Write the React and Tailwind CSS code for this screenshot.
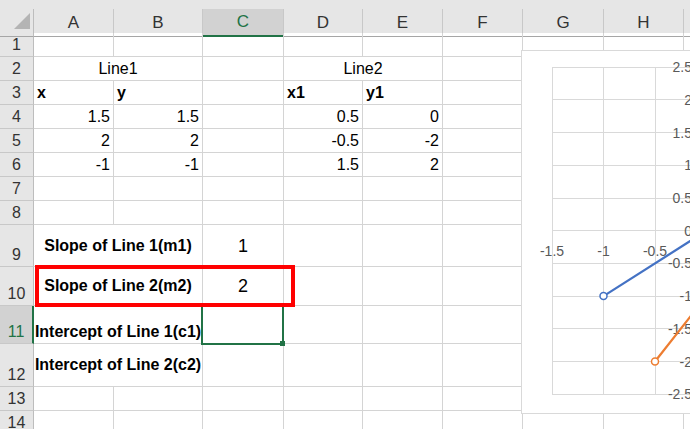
import React from "react";

const cols =
  "grid grid-cols-[34px_80px_89px_81px_79px_80px_80px_81px_80px_80px]";

const letters = ["A", "B", "C", "D", "E", "F", "G", "H", "I"];

// each row: height class, cells for A.. (rest filled empty)
const rows = [
  { n: 1, h: "h-[24px]", cells: [] },
  {
    n: 2,
    h: "h-[24px]",
    cells: [
      { span: 2, text: "Line1", align: "center" },
      {},
      { span: 2, text: "Line2", align: "center" },
    ],
  },
  {
    n: 3,
    h: "h-[24px]",
    cells: [
      { text: "x", bold: true },
      { text: "y", bold: true },
      {},
      { text: "x1", bold: true },
      { text: "y1", bold: true },
    ],
  },
  {
    n: 4,
    h: "h-[24px]",
    cells: [
      { text: "1.5", align: "right" },
      { text: "1.5", align: "right" },
      {},
      { text: "0.5", align: "right" },
      { text: "0", align: "right" },
    ],
  },
  {
    n: 5,
    h: "h-[24px]",
    cells: [
      { text: "2", align: "right" },
      { text: "2", align: "right" },
      {},
      { text: "-0.5", align: "right" },
      { text: "-2", align: "right" },
    ],
  },
  {
    n: 6,
    h: "h-[24px]",
    cells: [
      { text: "-1", align: "right" },
      { text: "-1", align: "right" },
      {},
      { text: "1.5", align: "right" },
      { text: "2", align: "right" },
    ],
  },
  { n: 7, h: "h-[24px]", cells: [] },
  { n: 8, h: "h-[24px]", cells: [] },
  {
    n: 9,
    h: "h-[42px]",
    cells: [
      { span: 2, text: "Slope of Line 1(m1)", bold: true, align: "center", mid: true },
      { text: "1", align: "center", mid: true, size: "text-[18px]" },
    ],
  },
  {
    n: 10,
    h: "h-[39px]",
    cells: [
      { span: 2, text: "Slope of Line 2(m2)", bold: true, align: "center", mid: true },
      { text: "2", align: "center", mid: true, size: "text-[18px]" },
    ],
  },
  {
    n: 11,
    h: "h-[38px]",
    active: true,
    cells: [
      { span: 2, text: "Intercept of Line 1(c1)", bold: true, align: "center" },
      {},
    ],
  },
  {
    n: 12,
    h: "h-[43px]",
    cells: [
      { span: 2, text: "Intercept of Line 2(c2)", bold: true, align: "center", mid: true },
      {},
    ],
  },
  { n: 13, h: "h-[24px]", cells: [] },
  { n: 14, h: "h-[24px]", cells: [] },
];

function Cell({ c }) {
  const span = c.span === 2 ? "col-span-2" : "";
  const justify =
    c.align === "right"
      ? "justify-end"
      : c.align === "center"
      ? "justify-center"
      : "justify-start";
  const items = c.mid ? "items-center" : "items-end pb-[2px]";
  const weight = c.bold ? "font-bold" : "font-normal";
  const size = c.size || "text-[16px]";
  return (
    <div
      className={`${span} flex ${justify} ${items} px-[3px] border-r border-b border-[#d4d4d4] overflow-visible whitespace-nowrap`}
    >
      {c.text && (
        <span className={`${weight} ${size} leading-[18px] text-black`}>
          {c.text}
        </span>
      )}
    </div>
  );
}

function Row({ row }) {
  const used = row.cells.reduce((s, c) => s + (c.span || 1), 0);
  const filler = Array.from({ length: Math.max(0, 9 - used) }, () => ({}));
  const all = [...row.cells, ...filler];
  return (
    <div className={`${cols} ${row.h}`}>
      <div
        className={
          row.active
            ? "flex items-end justify-center pb-[2px] bg-[#d2d2d2] border-b border-[#c8c8c8] border-r-2 border-r-[#217346] text-[16px] leading-[18px] text-[#217346]"
            : "flex items-end justify-center pb-[2px] bg-[#e6e6e6] border-b border-[#c8c8c8] border-r border-r-[#bdbdbd] text-[16px] leading-[18px] text-[#333333]"
        }
      >
        {row.n}
      </div>
      {all.map((c, i) => (
        <Cell key={i} c={c} />
      ))}
    </div>
  );
}

function Chart() {
  const X = (u) => 184.5 + 103 * u;
  const Y = (v) => 179.7 - 65.4 * v;
  const us = [-1.5, -1, -0.5, 0, 0.5, 1, 1.5, 2];
  const vs = [2.5, 2, 1.5, 1, 0.5, 0, -0.5, -1, -1.5, -2, -2.5];
  const blue = [
    [1.5, 1.5],
    [2, 2],
    [-1, -1],
  ];
  const orange = [
    [0.5, 0],
    [-0.5, -2],
    [1.5, 2],
  ];
  const pts = (arr) => arr.map(([u, v]) => `${X(u)},${Y(v)}`).join(" ");
  return (
    <div className="absolute left-[521px] top-[50px] w-[420px] h-[364px] bg-white border border-[#d9d9d9]">
      <svg width="420" height="362" className="block">
        {us.map((u) => (
          <line
            key={"v" + u}
            x1={X(u)}
            x2={X(u)}
            y1={Y(2.5)}
            y2={Y(-2.5)}
            stroke="#d9d9d9"
            strokeWidth="1"
            shapeRendering="crispEdges"
          />
        ))}
        {vs.map((v) => (
          <line
            key={"h" + v}
            x1={X(-1.5)}
            x2={X(2)}
            y1={Y(v)}
            y2={Y(v)}
            stroke="#d9d9d9"
            strokeWidth="1"
            shapeRendering="crispEdges"
          />
        ))}
        {[-1.5, -1, -0.5].map((u) => (
          <text
            key={"xl" + u}
            x={X(u)}
            y={Y(0) + 25}
            textAnchor="middle"
            fontSize="14"
            fill="#595959"
            fontFamily="Liberation Sans, Arial, sans-serif"
          >
            {u}
          </text>
        ))}
        {vs.map((v) => (
          <text
            key={"yl" + v}
            x={170}
            y={Y(v) + 5}
            textAnchor="end"
            fontSize="14"
            fill="#595959"
            fontFamily="Liberation Sans, Arial, sans-serif"
          >
            {v}
          </text>
        ))}
        <polyline
          points={pts(blue)}
          fill="none"
          stroke="#4472c4"
          strokeWidth="2.25"
          strokeLinejoin="round"
        />
        <polyline
          points={pts(orange)}
          fill="none"
          stroke="#ed7d31"
          strokeWidth="2.25"
          strokeLinejoin="round"
        />
        {blue.map(([u, v], i) => (
          <circle
            key={"bm" + i}
            cx={X(u)}
            cy={Y(v)}
            r="3.5"
            fill="white"
            stroke="#4472c4"
            strokeWidth="1.5"
          />
        ))}
        {orange.map(([u, v], i) => (
          <circle
            key={"om" + i}
            cx={X(u)}
            cy={Y(v)}
            r="3.5"
            fill="white"
            stroke="#ed7d31"
            strokeWidth="1.5"
          />
        ))}
      </svg>
    </div>
  );
}

export default function App() {
  return (
    <div className="relative w-[690px] h-[429px] overflow-hidden bg-white font-['Liberation_Sans',Arial,sans-serif]">
      {/* Top strip */}
      <div className="h-[9px] bg-[#e6e6e6]" />

      {/* Column headers */}
      <div className={`${cols} h-[24px] bg-[#e6e6e6]`}>
        <div className="relative border-r border-[#bdbdbd] border-b border-b-[#a6a6a6]">
          <svg width="34" height="23" className="absolute left-0 top-0">
            <polygon points="30,4 30,20 14,20" fill="#b4b4b4" />
          </svg>
        </div>
        {letters.map((l) =>
          l === "C" ? (
            <div
              key={l}
              className="flex items-center justify-center bg-[#d2d2d2] border-r border-[#c8c8c8] border-b-2 border-b-[#217346] text-[17px] text-[#217346]"
            >
              {l}
            </div>
          ) : (
            <div
              key={l}
              className="flex items-center justify-center border-r border-[#c8c8c8] border-b border-b-[#a6a6a6] text-[17px] text-[#333333]"
            >
              {l}
            </div>
          )
        )}
      </div>

      {/* Rows */}
      {rows.map((r) => (
        <Row key={r.n} row={r} />
      ))}

      <Chart />

      {/* Active cell C11 */}
      <div className="absolute left-[201px] top-[304px] w-[83px] h-[41px] border-2 border-[#217346]" />
      <div className="absolute left-[280px] top-[341px] w-[5px] h-[5px] bg-[#217346]" />

      {/* Red highlight box */}
      <div className="absolute left-[35px] top-[265px] w-[260px] h-[42px] border-4 border-[#ff0000]" />
    </div>
  );
}
